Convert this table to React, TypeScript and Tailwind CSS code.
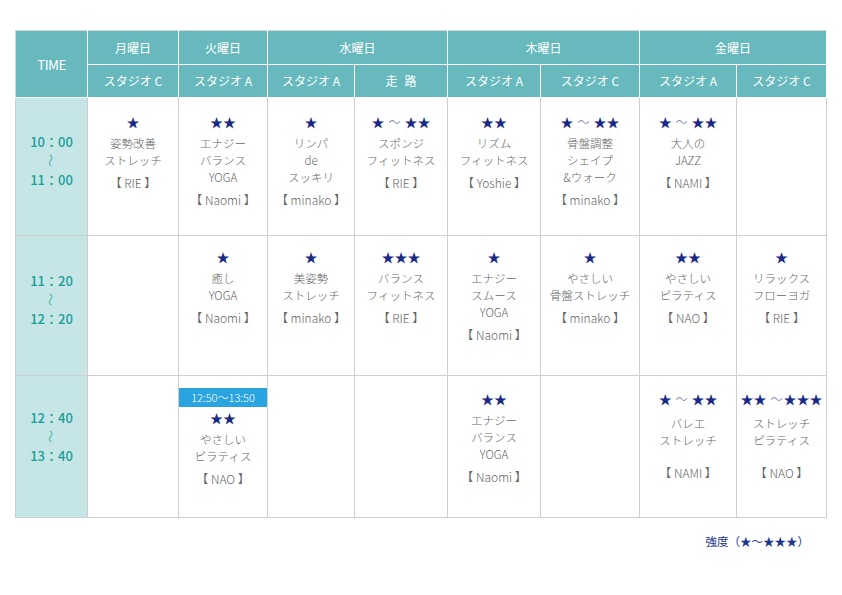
import React from "react";

type Lesson = {
  stars: string;
  lines: string[];
  name: string;
  badge?: string;
  spread?: boolean;
};

const rows: { time: [string, string]; h: string; pt: string; tpt: string; cells: (Lesson | null)[] }[] = [
  {
    time: ["10：00", "11：00"],
    h: "h-[138px]",
    pt: "pt-[15px]",
    tpt: "pt-[34px]",
    cells: [
      { stars: "★", lines: ["姿勢改善", "ストレッチ"], name: "RIE" },
      { stars: "★★", lines: ["エナジー", "バランス", "YOGA"], name: "Naomi" },
      { stars: "★", lines: ["リンパ", "de", "スッキリ"], name: "minako" },
      { stars: "★ ~ ★★", lines: ["スポンジ", "フィットネス"], name: "RIE" },
      { stars: "★★", lines: ["リズム", "フィットネス"], name: "Yoshie" },
      { stars: "★ ~ ★★", lines: ["骨盤調整", "シェイプ", "&ウォーク"], name: "minako" },
      { stars: "★ ~ ★★", lines: ["大人の", "JAZZ"], name: "NAMI" },
      null,
    ],
  },
  {
    time: ["11：20", "12：20"],
    h: "h-[140px]",
    pt: "pt-[12px]",
    tpt: "pt-[35px]",
    cells: [
      null,
      { stars: "★", lines: ["癒し", "YOGA"], name: "Naomi" },
      { stars: "★", lines: ["美姿勢", "ストレッチ"], name: "minako" },
      { stars: "★★★", lines: ["バランス", "フィットネス"], name: "RIE" },
      { stars: "★", lines: ["エナジー", "スムース", "YOGA"], name: "Naomi" },
      { stars: "★", lines: ["やさしい", "骨盤ストレッチ"], name: "minako" },
      { stars: "★★", lines: ["やさしい", "ピラティス"], name: "NAO" },
      { stars: "★", lines: ["リラックス", "フローヨガ"], name: "RIE" },
    ],
  },
  {
    time: ["12：40", "13：40"],
    h: "h-[142px]",
    pt: "pt-[14px]",
    tpt: "pt-[32px]",
    cells: [
      null,
      { stars: "★★", lines: ["やさしい", "ピラティス"], name: "NAO", badge: "12:50〜13:50" },
      null,
      null,
      { stars: "★★", lines: ["エナジー", "バランス", "YOGA"], name: "Naomi" },
      null,
      { stars: "★ ~ ★★", lines: ["バレエ", "ストレッチ"], name: "NAMI", spread: true },
      { stars: "★★ ~★★★", lines: ["ストレッチ", "ピラティス"], name: "NAO", spread: true },
    ],
  },
];

const days = [
  { label: "月曜日", span: 1 },
  { label: "火曜日", span: 1 },
  { label: "水曜日", span: 2 },
  { label: "木曜日", span: 2 },
  { label: "金曜日", span: 2 },
];

const studios = ["スタジオ C", "スタジオ A", "スタジオ A", "走路", "スタジオ A", "スタジオ C", "スタジオ A", "スタジオ C"];
const widths = ["w-[72px]", "w-[91px]", "w-[89px]", "w-[87px]", "w-[93px]", "w-[93px]", "w-[99px]", "w-[97px]", "w-[90px]"];

function Stars({ text }: { text: string }) {
  return (
    <div className="h-[18px] leading-[18px] text-[13px] text-[#1b2a86] whitespace-nowrap">
      {text.split("").map((c, i) =>
        c === "~" ? (
          <span key={i} className="text-[12px] text-[#5a6aa8] mx-[1px] font-light">～</span>
        ) : (
          <span key={i}>{c}</span>
        )
      )}
    </div>
  );
}

function Cell({ lesson, pt }: { lesson: Lesson | null; pt: string }) {
  if (!lesson) return <td className="border border-[#cfcfcf] bg-white" />;
  return (
    <td className="border border-[#cfcfcf] bg-white align-top p-0">
      {lesson.badge && (
        <div className="mt-[12px] h-[19px] leading-[19px] bg-[#2aa4de] text-white text-[11px] font-light text-center">
          {lesson.badge}
        </div>
      )}
      <div className={`flex flex-col items-center text-[#666666] font-light text-[11.5px] leading-[17px] ${lesson.badge ? "pt-[2px]" : pt}`}>
        <Stars text={lesson.stars} />
        <div className={lesson.spread ? "mt-[7px]" : "mt-[4px]"}>
          {lesson.lines.map((l, i) => (
            <div key={i} className="text-center whitespace-nowrap">{l}</div>
          ))}
        </div>
        <div className={`${lesson.spread ? "mt-[15px]" : "mt-[5px]"} whitespace-nowrap text-[12px]`}>
          【 {lesson.name} 】
        </div>
      </div>
    </td>
  );
}

export default function App() {
  return (
    <div className="w-[842px] h-[595px] bg-white pt-[30px] pl-[15px] font-['Noto_Sans_CJK_JP',sans-serif]">
      <table className="table-fixed border-collapse w-[811px] border border-[#d4d4d4]">
        <colgroup>
          {widths.map((w, i) => (
            <col key={i} className={w} />
          ))}
        </colgroup>
        <thead>
          <tr className="h-[34px] bg-[#67b9bd] text-white text-[12px]">
            <th rowSpan={2} className="border border-white border-t-[#d4d4d4] border-l-[#d4d4d4] font-normal text-[13.5px] tracking-[-0.6px]">
              TIME
            </th>
            {days.map((d) => (
              <th key={d.label} colSpan={d.span} className="border border-white border-t-[#d4d4d4] font-normal">
                {d.label}
              </th>
            ))}
          </tr>
          <tr className="h-[33px] bg-[#67b9bd] text-white text-[12px]">
            {studios.map((s, i) => (
              <th key={i} className="border border-white font-normal whitespace-nowrap">
                {s === "走路" ? (
                  <span>
                    走<span className="inline-block w-[7px]" />路
                  </span>
                ) : (
                  s
                )}
              </th>
            ))}
          </tr>
        </thead>
        <tbody>
          {rows.map((r, ri) => (
            <tr key={ri} className={r.h}>
              <td className={`border border-[#cfcfcf] bg-[#c6e5e7] align-top p-0 ${r.tpt}`}>
                <div className="flex flex-col items-center text-[#17a098] text-[13px] font-medium leading-[19px]">
                  <div>{r.time[0]}</div>
                  <div className="rotate-90 text-[13px] font-light">〜</div>
                  <div>{r.time[1]}</div>
                </div>
              </td>
              {r.cells.map((c, ci) => (
                <Cell key={ci} lesson={c} pt={r.pt} />
              ))}
            </tr>
          ))}
        </tbody>
      </table>
      <div className="w-[811px] flex justify-end pr-[17px] mt-[15px] text-[11.5px] text-[#22348f]">
        強度（★〜★★★）
      </div>
    </div>
  );
}
